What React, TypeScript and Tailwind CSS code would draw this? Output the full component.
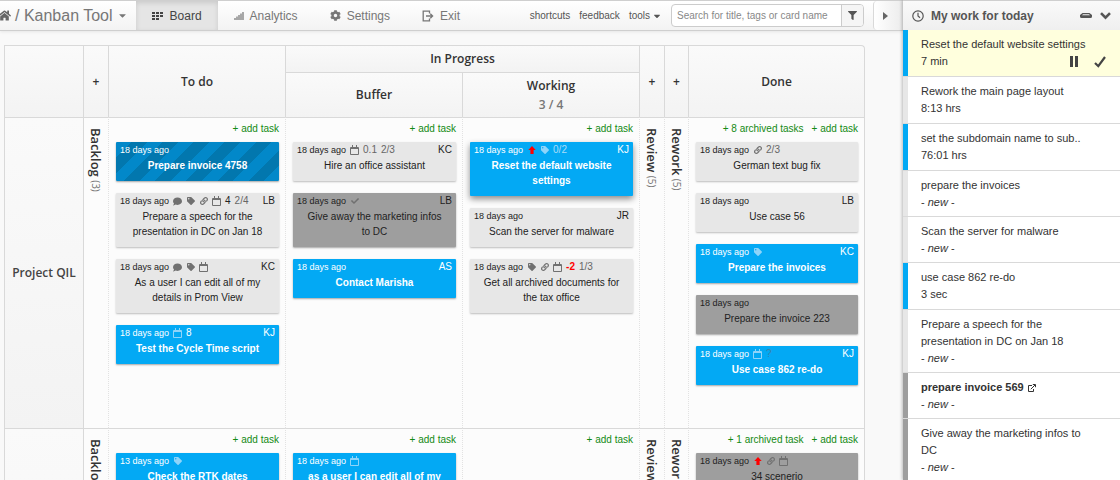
import type { ReactNode } from "react"
import { FaCaretDown, FaCheck, FaCog, FaComment, FaFilter, FaHome, FaLink, FaSignal, FaTag } from "react-icons/fa"

type Meta = "comment" | "tag" | "link" | "calendar" | "check" | "up" | { text: string; tone?: "strong" | "red" | "dim" }

type Card = {
  title: string
  age?: string
  color: "gray" | "dark" | "blue" | "striped" | "active"
  meta?: Meta[]
  who?: string
}

type Lane = { archived?: string; cards: Card[] }

type Work = { title: string; time?: string; bar: "blue" | "gray" | "dark"; active?: boolean; linked?: boolean }

const cardColors = {
  gray: "bg-[#e7e7e7] text-[#222] shadow-[0_1px_2px_rgba(0,0,0,0.25)]",
  dark: "bg-[#9e9e9e] text-[#222] shadow-[0_1px_2px_rgba(0,0,0,0.35)]",
  blue: "bg-[#03a9f4] text-white shadow-[0_1px_2px_rgba(0,0,0,0.35)]",
  striped:
    "bg-[repeating-linear-gradient(135deg,#0288c9_0px,#0288c9_11px,#0277ae_11px,#0277ae_22px)] text-white shadow-[0_1px_2px_rgba(0,0,0,0.35)]",
  active: "bg-[#03a9f4] text-white shadow-[0_3px_6px_rgba(0,0,0,0.45)]",
}

const barColors = { blue: "bg-[#03a9f4]", gray: "bg-[#e7e7e7]", dark: "bg-[#9e9e9e]" }

const projectLanes: Lane[] = [
  {
    cards: [
      { title: "Prepare invoice 4758", color: "striped" },
      {
        title: "Prepare a speech for the presentation in DC on Jan 18",
        color: "gray",
        who: "LB",
        meta: ["comment", "tag", "link", "calendar", { text: "4", tone: "strong" }, { text: "2/4" }],
      },
      { title: "As a user I can edit all of my details in Prom View", color: "gray", who: "KC", meta: ["comment", "tag", "calendar"] },
      { title: "Test the Cycle Time script", color: "blue", who: "KJ", meta: ["calendar", { text: "8", tone: "strong" }] },
    ],
  },
  {
    cards: [
      { title: "Hire an office assistant", color: "gray", who: "KC", meta: ["calendar", { text: "0.1" }, { text: "2/3" }] },
      { title: "Give away the marketing infos to DC", color: "dark", who: "LB", meta: ["check"] },
      { title: "Contact Marisha", color: "blue", who: "AS" },
    ],
  },
  {
    cards: [
      { title: "Reset the default website settings", color: "active", who: "KJ", meta: ["up", "tag", { text: "0/2" }] },
      { title: "Scan the server for malware", color: "gray", who: "JR" },
      {
        title: "Get all archived documents for the tax office",
        color: "gray",
        meta: ["tag", "link", "calendar", { text: "-2", tone: "red" }, { text: "1/3" }],
      },
    ],
  },
  {
    archived: "+ 8 archived tasks",
    cards: [
      { title: "German text bug fix", color: "gray", meta: ["link", { text: "2/3" }] },
      { title: "Use case 56", color: "gray", who: "LB" },
      { title: "Prepare the invoices", color: "blue", who: "KC", meta: ["tag"] },
      { title: "Prepare the invoice 223", color: "dark" },
      { title: "Use case 862 re-do", color: "blue", who: "KJ", meta: ["calendar", { text: "?", tone: "dim" }] },
    ],
  },
]

const secondLanes: Lane[] = [
  { cards: [{ title: "Check the RTK dates", age: "13 days ago", color: "blue", meta: ["tag"] }] },
  { cards: [{ title: "as a user I can edit all of my details", color: "blue", meta: ["calendar"] }] },
  { cards: [] },
  { archived: "+ 1 archived task", cards: [{ title: "34 scenerio", color: "dark", meta: ["up", "link", "calendar"] }] },
]

const work: Work[] = [
  { title: "Reset the default website settings", time: "7 min", bar: "blue", active: true },
  { title: "Rework the main page layout", time: "8:13 hrs", bar: "gray" },
  { title: "set the subdomain name to sub..", time: "76:01 hrs", bar: "blue" },
  { title: "prepare the invoices", bar: "gray" },
  { title: "Scan the server for malware", bar: "gray" },
  { title: "use case 862 re-do", time: "3 sec", bar: "blue" },
  { title: "Prepare a speech for the presentation in DC on Jan 18", bar: "gray" },
  { title: "prepare invoice 569", bar: "dark", linked: true },
  { title: "Give away the marketing infos to DC", bar: "dark" },
]

const BoardIcon = () => (
  <svg width="12" height="10" viewBox="0 0 12 10" fill="currentColor">
    <path d="M0 1h3v2H0zM4 1h3v2H4zM8 1h3v2H8zM0 4h3v2H0zM4 4h3v2H4zM8 4h3v2H8zM0 7h3v2H0zM4 7h3v2H4z" />
  </svg>
)

const ExitIcon = () => (
  <svg width="12" height="12" viewBox="0 0 12 12" fill="none" stroke="currentColor" strokeWidth="1.3">
    <path d="M7.5 3.5V1.2H1.2v9.6h6.3V8.5M4 6h6.5M8.3 3.8L10.6 6 8.3 8.2" />
  </svg>
)

const CalendarIcon = () => (
  <svg width="9" height="10" viewBox="0 0 9 10" fill="none" stroke="currentColor">
    <path d="M.5 2.5h8v7h-8zM.5 3.5h8M2.5 0v3M6.5 0v3" />
  </svg>
)

const UpIcon = () => (
  <svg width="8" height="8" viewBox="0 0 8 8" fill="#f00">
    <path d="M4 0l3.700 4H5.600v4H2.400V4H.3z" />
  </svg>
)

const ClockIcon = () => (
  <svg width="12" height="12" viewBox="0 0 12 12" fill="none" stroke="currentColor" strokeWidth="1.200">
    <circle cx="6" cy="6" r="5.2" />
    <path d="M6 2.800V6l2 1.800" />
  </svg>
)

const TrayIcon = () => (
  <svg width="12" height="5" viewBox="0 0 12 5" fill="currentColor">
    <path fillRule="evenodd" d="M2.500 0h7L12 2v1.500Q12 5 10.500 5h-9Q0 5 0 3.500V2zM3 1.200L2 2.300h8L9 1.200z" />
  </svg>
)

const ChevronIcon = () => (
  <svg width="11" height="8" viewBox="0 0 11 8" fill="none" stroke="currentColor" strokeWidth="2.600">
    <path d="M1 1.200l4.500 4.500L10 1.200" />
  </svg>
)

const PauseIcon = () => (
  <svg width="8" height="11" viewBox="0 0 8 11" fill="currentColor">
    <path d="M0 0h3v11H0zM5 0h3v11H5z" />
  </svg>
)

const TickIcon = () => (
  <svg width="12" height="12" viewBox="0 0 12 12" fill="none" stroke="currentColor" strokeWidth="2.200">
    <path d="M1 7l3.300 3.200L11 1" />
  </svg>
)

const ExternalIcon = () => (
  <svg width="8" height="8" viewBox="0 0 8 8" fill="none" stroke="currentColor">
    <path d="M4 1.500H.5v6h5V5M2.800 5.200L7 1M4.800.5h2.700v2.700" />
  </svg>
)

const textTones = { strong: "", red: "font-bold text-[#f00]", dim: "text-[#3b82ab]" }

function MetaItem({ item, light }: { item: Meta; light: boolean }) {
  if (typeof item !== "string") {
    const tone = item.tone ? textTones[item.tone] : light ? "text-[#a9dcf8]" : "text-[#666]"
    return <span className={tone}>{item.text}</span>
  }
  const icons: Record<string, ReactNode> = {
    comment: <FaComment size={9} />,
    tag: <FaTag size={8} />,
    link: <FaLink size={8} />,
    calendar: <CalendarIcon />,
    check: <FaCheck size={8} />,
    up: <UpIcon />,
  }
  return <span className={`flex w-[9px] justify-center ${light ? "text-[#8fd4f9]" : "text-[#707070]"}`}>{icons[item]}</span>
}

function TaskCard({ card }: { card: Card }) {
  const light = card.color !== "gray" && card.color !== "dark"
  return (
    <article className={`rounded-[1px] pb-2 ${cardColors[card.color]}`}>
      <div className="flex h-4 items-center gap-1 px-1 text-[10px] leading-4">
        <span className="text-[9px]">{card.age ?? "18 days ago"}</span>
        {card.meta?.map((m, i) => <MetaItem key={i} item={m} light={light} />)}
        <span className="ml-auto">{card.who}</span>
      </div>
      <h3 className={`px-[10px] text-center text-[10px] leading-[15px] ${light ? "font-bold" : ""}`}>{card.title}</h3>
    </article>
  )
}

function LaneCell({ lane }: { lane: Lane }) {
  return (
    <td className="border-t border-l border-t-[#d9d9d9] border-l-[#e2e2e2] bg-[#fcfcfc] pr-[6px] pl-[7px] align-top [border-left-style:dotted] last:border-r last:border-r-[#d9d9d9]">
      <div className="flex h-6 justify-end gap-2 text-[10px] leading-[22px] whitespace-nowrap text-[#138a13]">
        {lane.archived && <a href="#archived">{lane.archived}</a>}
        <a href="#add">+ add task</a>
      </div>
      <div className="flex flex-col gap-3">
        {lane.cards.map((card) => (
          <TaskCard key={card.title} card={card} />
        ))}
      </div>
    </td>
  )
}

function FoldedCell({ name, count, solid }: { name: string; count: number; solid?: boolean }) {
  return (
    <td className={`border-t border-l border-t-[#d9d9d9] bg-[#fcfcfc] pt-[10px] align-top ${solid ? "border-l-[#d9d9d9]" : "border-l-[#e2e2e2] [border-left-style:dotted]"}`}>
      <div className="flex justify-center">
        <div className="font-[Open_Sans,sans-serif] text-[13px] leading-4 font-semibold whitespace-nowrap text-[#333] [writing-mode:vertical-rl]">
          {name} <span className="text-[10px] font-normal text-[#777]">({count})</span>
        </div>
      </div>
    </td>
  )
}

function BoardRow({ name, lanes }: { name: string; lanes: Lane[] }) {
  return (
    <tr className="h-[311px]">
      <th className="border-t border-l border-[#d9d9d9] bg-[linear-gradient(#fafafa,#f3f3f3)] font-[Open_Sans,sans-serif] text-xs font-semibold text-[#444]">
        {name}
      </th>
      <FoldedCell name="Backlog" count={3} solid />
      <LaneCell lane={lanes[0]} />
      <LaneCell lane={lanes[1]} />
      <LaneCell lane={lanes[2]} />
      <FoldedCell name="Review" count={5} />
      <FoldedCell name="Rework" count={5} />
      <LaneCell lane={lanes[3]} />
    </tr>
  )
}

function Board() {
  const head = "border-t border-l border-[#d9d9d9] bg-[linear-gradient(#fafafa,#f3f3f3)] font-semibold"
  return (
    <table className="w-full table-fixed border-separate border-spacing-0">
      <colgroup>
        <col className="w-[79px]" />
        <col className="w-[25px]" />
        <col />
        <col />
        <col />
        <col className="w-[25px]" />
        <col className="w-6" />
        <col />
      </colgroup>
      <thead className="font-[Open_Sans,sans-serif] text-xs text-[#333]">
        <tr className="h-[27px]">
          <th rowSpan={2} className={head}></th>
          <th rowSpan={2} className={head}>
            <button type="button" aria-label="Expand Backlog">+</button>
          </th>
          <th rowSpan={2} className={head}>To do</th>
          <th colSpan={2} className={head}>In Progress</th>
          <th rowSpan={2} className={head}>
            <button type="button" aria-label="Expand Review">+</button>
          </th>
          <th rowSpan={2} className={head}>
            <button type="button" aria-label="Expand Rework">+</button>
          </th>
          <th rowSpan={2} className={`rounded-tr border-r ${head}`}>Done</th>
        </tr>
        <tr className="h-[45px]">
          <th className={head}>Buffer</th>
          <th className={`leading-[19px] ${head}`}>
            Working
            <div className="text-[#777]">3 / 4</div>
          </th>
        </tr>
      </thead>
      <tbody>
        <BoardRow name="Project QIL" lanes={projectLanes} />
        <BoardRow name="" lanes={secondLanes} />
      </tbody>
    </table>
  )
}

function NavLink({ icon, label, active }: { icon: ReactNode; label: string; active?: boolean }) {
  return (
    <a
      href={`#${label.toLowerCase()}`}
      className={`flex items-center gap-[6px] px-4 text-xs ${active ? "bg-[#e5e5e5] text-[#444] shadow-[inset_0_2px_5px_rgba(0,0,0,0.12)]" : "text-[#777]"}`}
    >
      {icon}
      {label}
    </a>
  )
}

function TopBar() {
  return (
    <header className="flex h-[31px] border-t border-b border-[#cfcfcf] bg-[linear-gradient(#ffffff,#f3f3f3)] shadow-[0_1px_3px_rgba(0,0,0,0.08)]">
      <a href="#home" className="flex items-center pr-2 text-base whitespace-nowrap text-[#777]">
        <FaHome size={13} className="-ml-[2px] text-[#666]" />
        <span className="ml-1">/ Kanban Tool</span>
        <FaCaretDown size={11} className="ml-1" />
      </a>
      <nav className="flex">
        <NavLink icon={<BoardIcon />} label="Board" active />
        <NavLink icon={<FaSignal size={10} />} label="Analytics" />
        <NavLink icon={<FaCog size={11} />} label="Settings" />
        <NavLink icon={<ExitIcon />} label="Exit" />
      </nav>
      <div className="ml-auto flex items-center gap-[9px] text-[10px] whitespace-nowrap text-[#555]">
        <a href="#shortcuts">shortcuts</a>
        <a href="#feedback">feedback</a>
        <a href="#tools" className="flex items-center gap-[2px]">
          tools <FaCaretDown size={10} />
        </a>
        <form className="flex h-[23px] w-[193px] overflow-hidden rounded border border-[#ccc] bg-white">
          <input
            type="text"
            aria-label="Search"
            placeholder="Search for title, tags or card name"
            className="min-w-0 flex-1 pl-[5px] text-[10px] outline-none placeholder:text-[#888]"
          />
          <button type="button" aria-label="Filter" className="flex w-[22px] items-center justify-center border-l border-[#ccc] bg-[#f5f5f5] text-[#555]">
            <FaFilter size={9} />
          </button>
        </form>
        <button type="button" aria-label="Hide panel" className="flex h-[29px] w-[30px] items-center rounded-l border-l border-[#d9d9d9] bg-[linear-gradient(90deg,#ffffff,#ececec)] pl-[9px]">
          <svg width="5" height="8" viewBox="0 0 5 8" fill="#666">
            <path d="M0 0l5 4-5 4z" />
          </svg>
        </button>
      </div>
    </header>
  )
}

function WorkPanel() {
  return (
    <aside className="flex w-[217px] shrink-0 flex-col overflow-hidden bg-white text-[11px] text-[#333] shadow-[-1px_0_3px_rgba(0,0,0,0.25)]">
      <div className="flex h-[30px] shrink-0 items-center border-t border-[#cfcfcf] bg-[linear-gradient(#fafafa,#efefef)] px-[9px] text-[#555]">
        <ClockIcon />
        <h2 className="ml-[7px] text-xs font-bold">My work for today</h2>
        <button type="button" aria-label="Collapse" className="ml-auto">
          <TrayIcon />
        </button>
        <button type="button" aria-label="More" className="ml-2">
          <ChevronIcon />
        </button>
      </div>
      <ul>
        {work.map((item) => (
          <li key={item.title} className={`flex border-b border-[#d9d9d9] ${item.active ? "bg-[#ffffdd]" : ""}`}>
            <div className={`w-[5px] shrink-0 ${barColors[item.bar]}`}></div>
            <div className="min-w-0 flex-1 py-[6px] pr-[14px] pl-[13px] leading-[17px]">
              <p className={item.linked ? "flex items-center gap-1 font-bold" : "pr-2"}>
                {item.title}
                {item.linked && <ExternalIcon />}
              </p>
              {item.time ? (
                <div className="flex items-center">
                  {item.time}
                  {item.active && (
                    <span className="ml-auto flex items-center gap-4 text-[#444]">
                      <button type="button" aria-label="Pause">
                        <PauseIcon />
                      </button>
                      <button type="button" aria-label="Done">
                        <TickIcon />
                      </button>
                    </span>
                  )}
                </div>
              ) : (
                <p className="leading-4">
                  - <i>new</i> -
                </p>
              )}
            </div>
          </li>
        ))}
      </ul>
    </aside>
  )
}

const App = () => {
  return (
    <div className="flex h-screen overflow-hidden bg-[#f9f9f9] font-[Liberation_Sans,Arial,sans-serif]">
      <div className="min-w-0 flex-1">
        <TopBar />
        <main className="pt-[14px] pr-[38px] pl-1">
          <Board />
        </main>
      </div>
      <WorkPanel />
    </div>
  )
}

export default App
